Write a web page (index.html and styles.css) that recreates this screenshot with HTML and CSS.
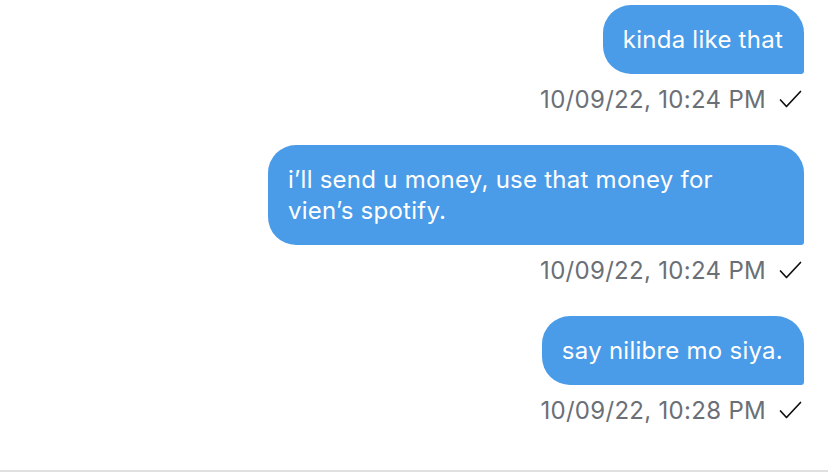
FILE: index.html
```html
<!DOCTYPE html>
<html>
<head>
<meta charset="utf-8">
<link rel="stylesheet" href="styles.css">
</head>
<body>
<div class="thread">
  <div class="msg">
    <div class="bubble">kinda like that</div>
    <div class="meta"><span class="time">10/09/22, 10:24 PM</span><svg class="check" width="23" height="18" viewBox="0 0 23 18"><path d="M1.5 10 L7.5 16.5 L21.5 1.5" fill="none" stroke="#111" stroke-width="1.7" stroke-linecap="round" stroke-linejoin="round"/></svg></div>
  </div>
  <div class="msg">
    <div class="bubble">i’ll send u money, use that money for vien’s&nbsp;spotify.</div>
    <div class="meta"><span class="time">10/09/22, 10:24 PM</span><svg class="check" width="23" height="18" viewBox="0 0 23 18"><path d="M1.5 10 L7.5 16.5 L21.5 1.5" fill="none" stroke="#111" stroke-width="1.7" stroke-linecap="round" stroke-linejoin="round"/></svg></div>
  </div>
  <div class="msg">
    <div class="bubble">say nilibre mo siya.</div>
    <div class="meta"><span class="time">10/09/22, 10:28 PM</span><svg class="check" width="23" height="18" viewBox="0 0 23 18"><path d="M1.5 10 L7.5 16.5 L21.5 1.5" fill="none" stroke="#111" stroke-width="1.7" stroke-linecap="round" stroke-linejoin="round"/></svg></div>
  </div>
</div>
<div class="divider"></div>
</body>
</html>
```
FILE: styles.css
```css
* { box-sizing: border-box; }
html, body { margin: 0; padding: 0; background: #fff; }
body {
  width: 828px;
  height: 472px;
  overflow: hidden;
  font-family: Inter, "Noto Sans", sans-serif;
  display: flex;
  flex-direction: column;
}
.thread {
  flex: 1;
  display: flex;
  flex-direction: column;
  align-items: flex-end;
  padding: 5px 24px 0 0;
  gap: 33px;
}
.msg {
  display: flex;
  flex-direction: column;
  align-items: flex-end;
}
.bubble {
  background: #4a9be8;
  color: #fff;
  font-size: 24px;
  line-height: 31px;
  letter-spacing: 0.25px;
  padding: 19px 21px 19px 20px;
  border-radius: 28px 28px 3px 28px;
  max-width: 536px;
}
.meta {
  margin-top: 12px;
  height: 26px;
  display: flex;
  align-items: center;
  gap: 13px;
  padding-right: 2px;
  color: #6b6f76;
  font-size: 24px;
  letter-spacing: 0.3px;
}
.check { display: block; }
.divider {
  height: 2px;
  background: #e0e0e0;
}
```
